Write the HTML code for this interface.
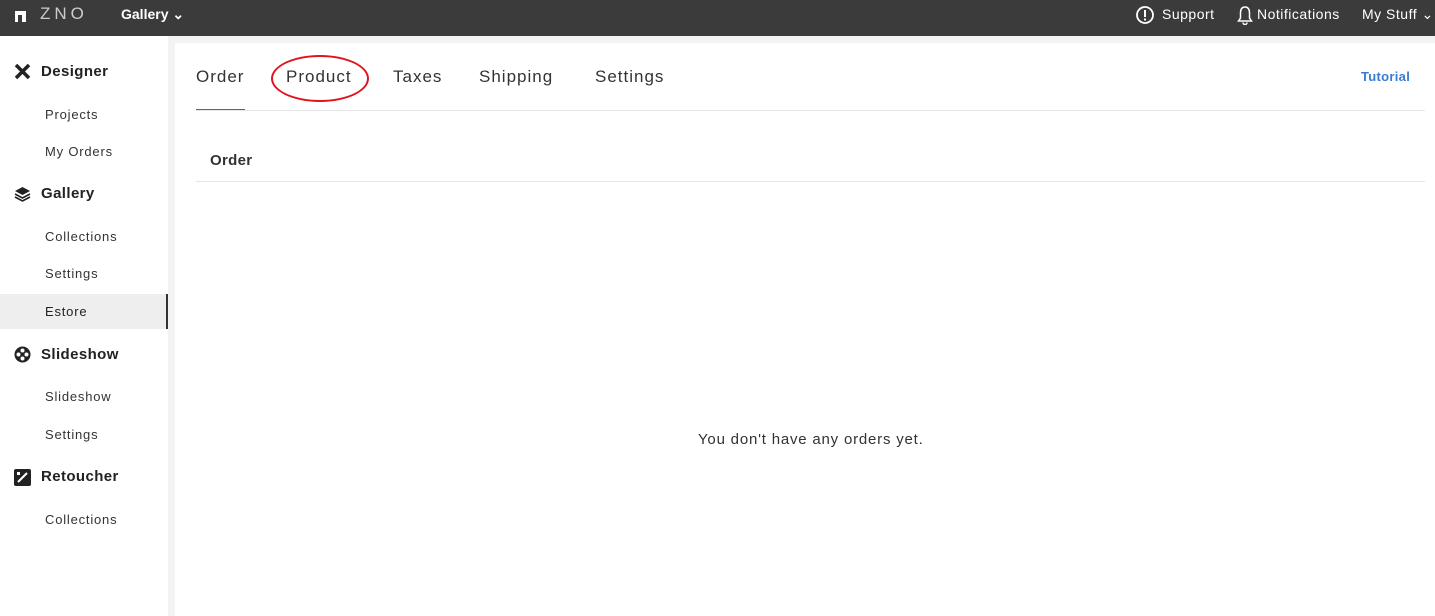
<!DOCTYPE html>
<html><head><style>
*{margin:0;padding:0;box-sizing:border-box}
body{width:1435px;height:616px;background:#f3f3f3;font-family:"Liberation Sans",sans-serif;color:#333;position:relative;overflow:hidden}
.top{position:absolute;left:0;top:0;width:1435px;height:36px;background:#3b3b3b;color:#fff;font-size:14px;letter-spacing:0.5px}
.top span{position:absolute;top:6px}
.side{position:absolute;left:0;top:36px;width:168px;height:580px;background:#fff}
.main{position:absolute;left:175px;top:43px;width:1260px;height:573px;background:#fff}
.h{position:absolute;left:41px;font-size:15px;font-weight:bold;color:#222;letter-spacing:0.4px}
.s{position:absolute;left:45px;font-size:13px;color:#333;letter-spacing:0.8px}
.ic{position:absolute;left:14px;width:17px;height:17px}
.tab{position:absolute;top:24px;font-size:17px;color:#333;letter-spacing:1px}
</style></head><body>
<div class="top">
<div style="position:absolute;left:15px;top:11px;width:11px;height:11px;background:#fff"></div>
<div style="position:absolute;left:18px;top:15px;width:4px;height:7px;background:#3b3b3b"></div>
<span style="left:40px;top:4px;font-size:17px;letter-spacing:4px;color:#ccc">ZNO</span>
<span style="left:121px;font-weight:bold;letter-spacing:0">Gallery ⌄</span>
<svg style="position:absolute;left:1135px;top:5px" width="20" height="20"><circle cx="10" cy="10" r="8" fill="none" stroke="#fff" stroke-width="1.8"/><rect x="9" y="5" width="2" height="7" fill="#fff"/><rect x="9" y="13.5" width="2" height="2" fill="#fff"/></svg>
<span style="left:1162px">Support</span>
<svg style="position:absolute;left:1237px;top:5px" width="16" height="20"><path d="M8 2C4.5 2 3.5 5 3.5 8v5L1.5 16h13l-2-3V8C12.5 5 11.5 2 8 2zM6 17.5a2 2 0 0 0 4 0" fill="none" stroke="#fff" stroke-width="1.5"/></svg>
<span style="left:1257px">Notifications</span>
<span style="left:1362px">My Stuff ⌄</span>
</div>
<div class="side">
<svg class="ic" style="top:27px" viewBox="0 0 17 17"><path d="M2 2l13 13M15 2L2 15" stroke="#222" stroke-width="3.5"/></svg>
<div class="h" style="top:27px">Designer</div>
<div class="s" style="top:71px">Projects</div>
<div class="s" style="top:108px">My Orders</div>
<svg class="ic" style="top:149px" viewBox="0 0 17 17"><path d="M8.5 2L16 6 8.5 10 1 6z" fill="#222"/><path d="M1 9l7.5 4 7.5-4M1 12l7.5 4 7.5-4" fill="none" stroke="#222" stroke-width="1.6"/></svg>
<div class="h" style="top:149px">Gallery</div>
<div class="s" style="top:193px">Collections</div>
<div class="s" style="top:230px">Settings</div>
<div style="position:absolute;left:0;top:258px;width:168px;height:35px;background:#eee;border-right:2px solid #333"></div>
<div class="s" style="top:268px;color:#222">Estore</div>
<svg class="ic" style="top:310px" viewBox="0 0 17 17"><circle cx="8.5" cy="8.5" r="8" fill="#222"/><circle cx="8.5" cy="4.5" r="2" fill="#fff"/><circle cx="4.5" cy="8.5" r="2" fill="#fff"/><circle cx="12.5" cy="8.5" r="2" fill="#fff"/><circle cx="8.5" cy="12.5" r="2" fill="#fff"/></svg>
<div class="h" style="top:310px">Slideshow</div>
<div class="s" style="top:353px">Slideshow</div>
<div class="s" style="top:391px">Settings</div>
<svg class="ic" style="top:433px" viewBox="0 0 17 17"><rect x="0" y="0" width="17" height="17" rx="2" fill="#222"/><path d="M4 13l9-9" stroke="#fff" stroke-width="2"/><rect x="3" y="3" width="3" height="3" fill="#fff"/></svg>
<div class="h" style="top:432px">Retoucher</div>
<div class="s" style="top:476px">Collections</div>
</div>
<div class="main">
<div class="tab" style="left:21px">Order</div>
<div style="position:absolute;left:21px;top:66px;width:49px;height:2px;background:#666"></div>
<div class="tab" style="left:111px">Product</div>
<div style="position:absolute;left:96px;top:12px;width:98px;height:47px;border:2.5px solid #e0141e;border-radius:50%"></div>
<div class="tab" style="left:218px">Taxes</div>
<div class="tab" style="left:304px">Shipping</div>
<div class="tab" style="left:420px">Settings</div>
<div style="position:absolute;left:1186px;top:26px;font-size:13px;color:#3a7bd5;font-weight:bold;letter-spacing:0.3px">Tutorial</div>
<div style="position:absolute;left:21px;top:67px;width:1229px;height:1px;background:#e5e5e5"></div>
<div style="position:absolute;left:35px;top:109px;font-size:15px;font-weight:bold;color:#333;letter-spacing:0.3px">Order</div>
<div style="position:absolute;left:21px;top:138px;width:1229px;height:1px;background:#e5e5e5"></div>
<div style="position:absolute;left:523px;top:388px;font-size:15px;color:#333;letter-spacing:0.8px">You don't have any orders yet.</div>
</div>
</body></html>
